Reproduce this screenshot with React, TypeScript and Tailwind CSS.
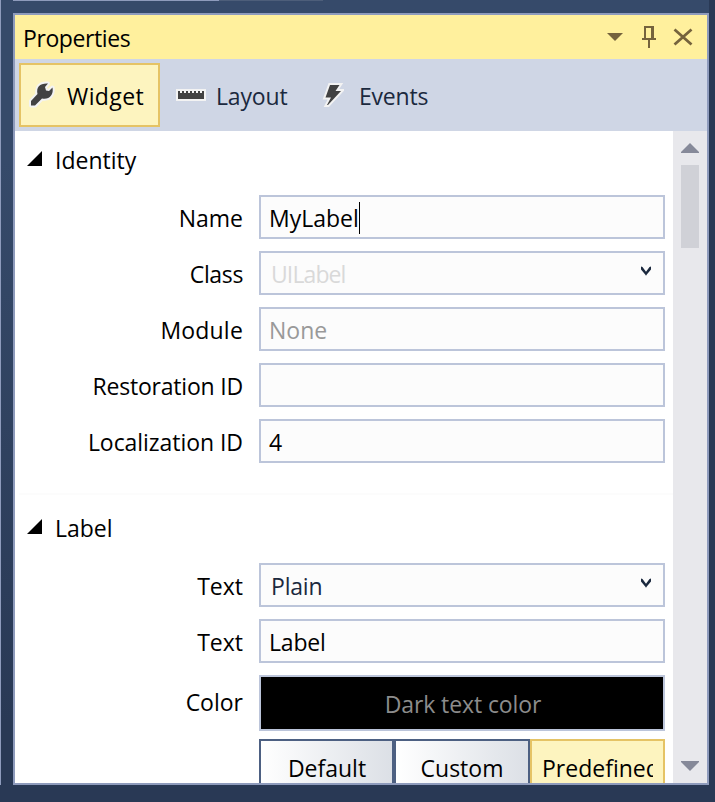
import type { ReactNode } from "react";

const chevron = (
  <svg className="mr-[12px] mb-[6px] h-[10px] w-[10px]" viewBox="0 0 10 10" fill="#1b293e">
    <path d="M0 0.5L1.5 1L5 5.8L8.5 1L10 0.5V3.6L5.8 8.6L5 9.8L4.2 8.6L0 3.6Z" />
  </svg>
);

interface RowProps {
  label: string;
  tracking?: string;
  offset?: string;
  children: ReactNode;
}

function Row({ label, tracking = "", offset = "pt-px", children }: RowProps) {
  return (
    <div className="flex">
      <div className={`flex w-[228px] shrink-0 items-center justify-end whitespace-pre ${tracking}`}>
        <span className={offset}>{label}</span>
      </div>
      <div className="ml-4 w-[406px] shrink-0">{children}</div>
    </div>
  );
}

interface FieldProps {
  children?: ReactNode;
  select?: boolean;
  className?: string;
}

function Field({ children, select, className = "" }: FieldProps) {
  return (
    <div
      className={`flex h-11 items-center justify-between border-2 border-[#bcc5da] bg-[#fcfcfc] pt-px ${select ? "pl-[10px]" : "pl-2"} ${className}`}
    >
      <span className="flex items-center whitespace-pre">{children}</span>
      {select && chevron}
    </div>
  );
}

function Heading({ children }: { children: ReactNode }) {
  return (
    <div className="flex h-8 items-center pl-3">
      <svg className="mb-[5px] h-[15px] w-[15px]" viewBox="0 0 15 15">
        <path d="M15 0V15H0Z" fill="#000" />
      </svg>
      <span className="mb-[2px] ml-[13px]">{children}</span>
    </div>
  );
}

export default function App() {
  return (
    <div className="relative h-[802px] w-[715px] overflow-hidden bg-linear-to-b from-[#364a6a] from-20% to-[#293955] to-90% pt-[13px] pl-[13px] font-['Open_Sans','Noto_Sans',sans-serif] text-[23px] leading-8 text-black">
      <div className="absolute top-0 left-0 h-[785px] w-px bg-[#8e9bbc]" />
      <div className="absolute top-0 left-[13px] h-px w-[206px] bg-[#8e9bbc]" />
      <div className="absolute top-0 left-[219px] h-px w-[104px] bg-[#4d5e7a]" />
      <div className="absolute top-0 right-0 h-full w-[6px] bg-[#293955]" />
      <div className="absolute bottom-0 left-0 h-[17px] w-full bg-[#293955]" />

      <div className="relative flex h-[772px] w-[696px] flex-col border-2 border-[#8e9bbc] bg-white">
        <header className="flex h-11 shrink-0 items-center justify-between bg-[#fff09d] pl-2">
          <span className="pt-[2px] tracking-[-0.4px]">Properties</span>
          <div className="flex items-center pt-[2px] pr-[14px]">
            <svg className="h-8 w-[86px]" viewBox="607 22 86 32" fill="none" stroke="#75633d">
              <path d="M607 33H623L615 41Z" fill="#75633d" stroke="none" />
              <path d="M645 39V27H653V39M642 39H656M649 40V48M652 27V39" strokeWidth="2" />
              <path d="M674.5 29.5L691.5 44.5M691.5 29.5L674.5 44.5" strokeWidth="2.8" />
            </svg>
          </div>
        </header>

        <nav className="flex h-[72px] shrink-0 items-center bg-[#cfd6e5] pl-1 text-[#1b293e]">
          <div className="flex h-16 w-[141px] items-center border-2 border-[#e5c365] bg-[#fdf4bf] pl-[6px] text-black">
            <svg className="h-[28px] w-[28px]" viewBox="27 81 28 28">
              <path
                d="M31 101L37.5 94C36 87 40 83 48 83.5L45 87L46 90.5L49 91L52.5 87.5C54 95 49 100 42 98.5L35 105.5H31Z"
                fill="#424242"
                stroke="#f3f3f3"
                strokeWidth="4"
                strokeLinejoin="round"
                paintOrder="stroke"
              />
            </svg>
            <span className="ml-3 pt-px tracking-[0.4px]">Widget</span>
          </div>
          <svg className="ml-4 h-3 w-[30px]" viewBox="0 0 30 12">
            <path d="M0 0H30V12H0Z" fill="#f3f3f3" />
            <path d="M2 10V2H4V4H6V2H8V4H10V2H12V4H14V2H16V4H18V2H20V4H22V2H24V4H26V2H28V10Z" fill="#424242" />
          </svg>
          <span className="ml-[10px] w-[71px] pt-px tracking-[-0.15px]">Layout</span>
          <svg className="ml-[35px] h-[26px] w-[22px]" viewBox="322 82 22 26">
            <path
              d="M330 85H339.5L335.5 91H341L328 105H327L331 97.5H325.5Z"
              fill="#424242"
              stroke="#f3f3f3"
              strokeWidth="4"
              paintOrder="stroke"
            />
          </svg>
          <span className="ml-[15px] pt-px tracking-[-0.2px]">Events</span>
        </nav>

        <div className="flex min-h-0 flex-1">
          <main className="w-[658px] overflow-hidden pt-[14px]">
            <Heading>Identity</Heading>
            <div className="mt-[18px] flex flex-col gap-3">
              <Row label="Name">
                <Field>
                  MyLabel
                  <span className="h-8 w-px bg-black" />
                </Field>
              </Row>
              <Row label="Class" tracking="tracking-[-0.35px]">
                <Field select className="tracking-[-0.9px] text-[#d9d9d9]">UILabel</Field>
              </Row>
              <Row label="Module" tracking="tracking-[0.2px]">
                <Field className="text-[#999]">None</Field>
              </Row>
              <Row label="Restoration ID" tracking="tracking-[-0.2px]">
                <Field />
              </Row>
              <Row label="Localization ID" tracking="tracking-[-0.05px]">
                <Field>4</Field>
              </Row>
            </div>
            <div className="mt-[30px] ml-1 h-[2px] bg-[#fcfcfc]" />
            <div className="mt-[18px]">
              <Heading>Label</Heading>
            </div>
            <div className="mt-[18px] flex flex-col gap-3">
              <Row label="Text">
                <Field select className="tracking-[-0.2px] text-[#1b293e]">Plain</Field>
              </Row>
              <Row label="Text">
                <Field className="tracking-[-0.2px]">Label</Field>
              </Row>
              <Row label="Color" offset="pb-[2px]">
                <div className="flex h-14 items-center justify-center border-2 border-[#bcc5da] bg-black pt-px pl-[2px] tracking-[-0.1px] text-[#8c8c8c]">
                  Dark text color
                </div>
              </Row>
            </div>
            <div className="mt-2 ml-[244px] flex h-14 w-[406px] text-center">
              <div className="w-[135px] border-2 border-[#4d6082] bg-linear-to-r from-white to-[#dce0e6] pt-[11px] pl-px">Default</div>
              <div className="w-[136px] border-2 border-[#4d6082] bg-linear-to-r from-white to-[#dce0e6] pt-[11px]">Custom</div>
              <div className="w-[135px] border-2 border-[#e5c365] bg-[#fdf4bf] pt-[11px] pl-[10px] text-left">
                <div className="w-[111px] overflow-hidden">Predefined</div>
              </div>
            </div>
          </main>
          <div className="flex w-[34px] flex-col items-center bg-[#e8e8ec] pt-3 pb-3">
            <svg className="h-[10px] w-[18px]" viewBox="0 0 18 10">
              <path d="M9 0L18 9V10H0V9Z" fill="#868999" />
            </svg>
            <div className="mt-3 h-[83px] w-[18px] bg-[#d0d1d7]" />
            <svg className="mt-auto h-[10px] w-[18px]" viewBox="0 0 18 10">
              <path d="M9 10L18 1V0H0V1Z" fill="#868999" />
            </svg>
          </div>
        </div>
      </div>
    </div>
  );
}
